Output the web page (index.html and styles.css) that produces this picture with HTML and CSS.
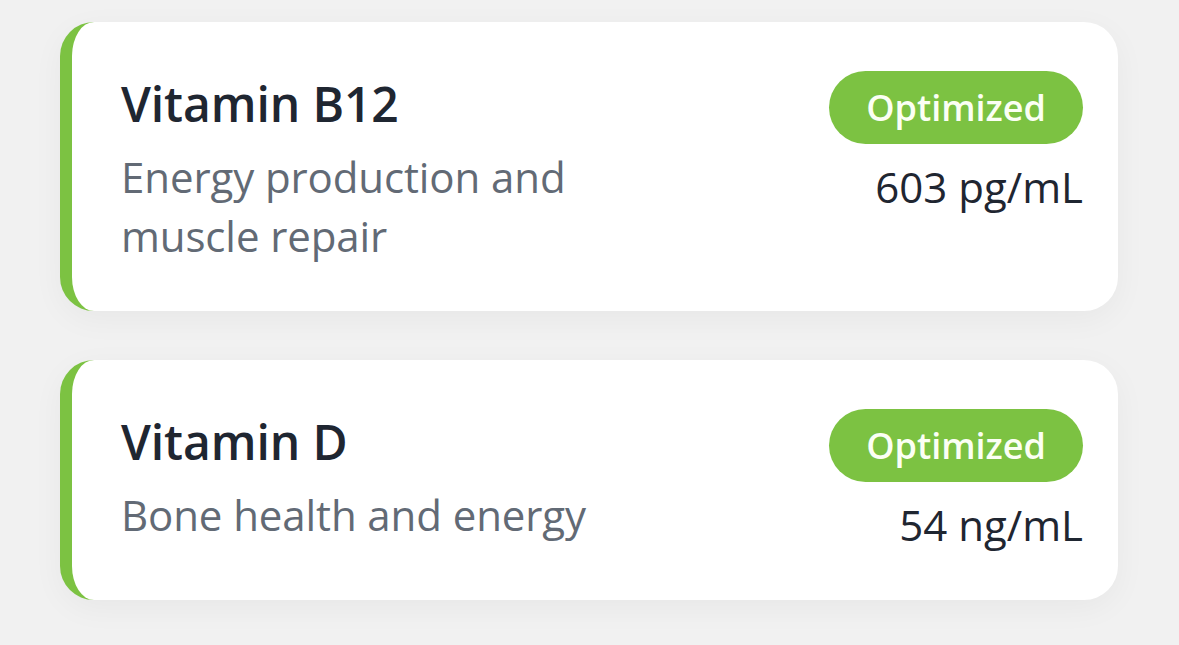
FILE: index.html
```html
<!DOCTYPE html>
<html lang="en">
<head>
<meta charset="utf-8">
<title>Vitamins</title>
<link rel="stylesheet" href="styles.css">
</head>
<body>
  <main class="list">
    <article class="card">
      <div class="info">
        <h2 class="title">Vitamin B12</h2>
        <p class="desc">Energy production and<br>muscle repair</p>
      </div>
      <div class="status">
        <span class="badge">Optimized</span>
        <span class="value">603 pg/mL</span>
      </div>
    </article>
    <article class="card">
      <div class="info">
        <h2 class="title">Vitamin D</h2>
        <p class="desc">Bone health and energy</p>
      </div>
      <div class="status">
        <span class="badge">Optimized</span>
        <span class="value">54 ng/mL</span>
      </div>
    </article>
  </main>
</body>
</html>
```

FILE: styles.css
```css
html, body {
  margin: 0;
  padding: 0;
}
body {
  background: #f1f1f1;
  font-family: "Open Sans", "Noto Sans", sans-serif;
  width: 1179px;
  height: 645px;
  overflow: hidden;
}
.list {
  display: flex;
  flex-direction: column;
  gap: 49px;
  padding: 22px 61px 0 60px;
}
.card {
  display: flex;
  justify-content: space-between;
  align-items: flex-start;
  background: #ffffff;
  border-left: 12px solid #7cc242;
  border-radius: 34px;
  padding: 49px 35px 46px 49px;
  box-shadow: 0 8px 32px rgba(0, 0, 0, 0.045);
}
.info {
  display: flex;
  flex-direction: column;
}
.title {
  margin: 0;
  font-size: 48px;
  font-weight: 600;
  line-height: 65px;
  color: #1f2631;
  letter-spacing: -0.1px;
}
.desc {
  margin: 11px 0 0;
  font-size: 42px;
  font-weight: 400;
  line-height: 59px;
  color: #626a75;
  letter-spacing: -0.1px;
}
.status {
  display: flex;
  flex-direction: column;
  align-items: flex-end;
}
.badge {
  display: inline-flex;
  align-items: center;
  justify-content: center;
  height: 73px;
  padding: 0 37px;
  border-radius: 37px;
  background: #7cc242;
  color: #fbfff4;
  font-size: 36px;
  font-weight: 600;
  box-sizing: border-box;
}
.value {
  margin-top: 13px;
  font-size: 42px;
  line-height: 59px;
  color: #1f2631;
}
```
